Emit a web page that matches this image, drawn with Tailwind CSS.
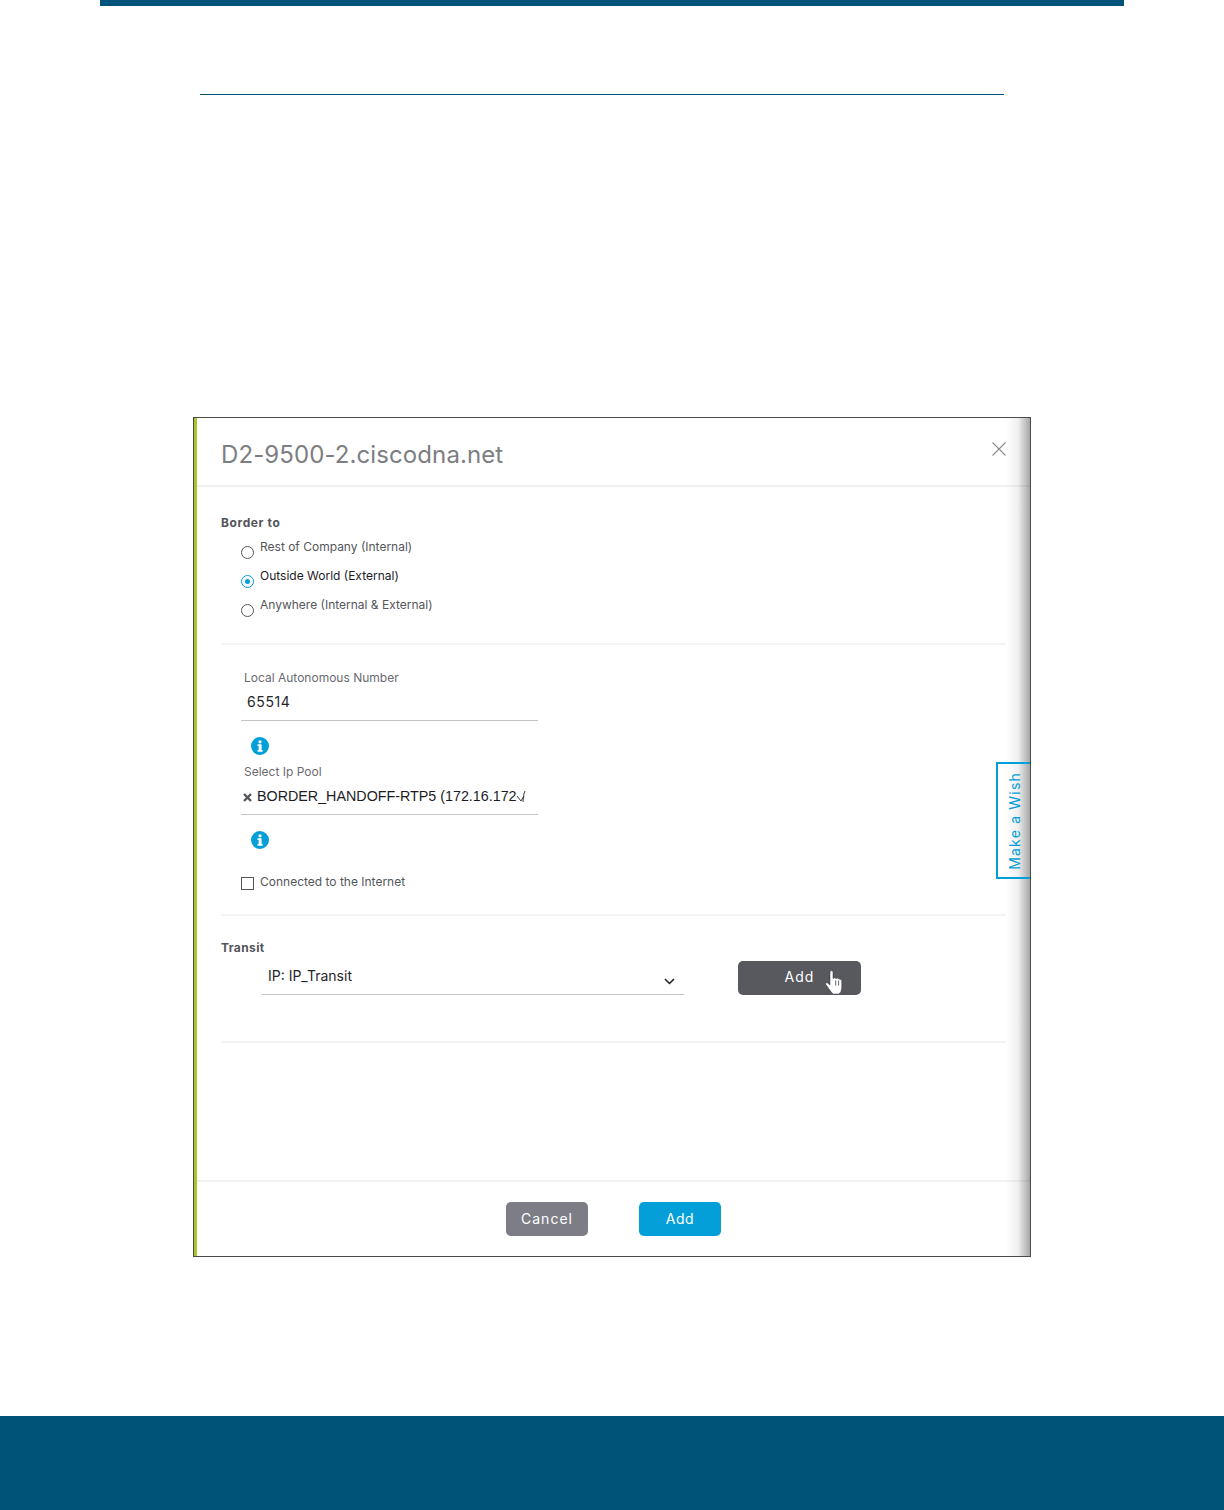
<!DOCTYPE html>
<html lang="en">
<head>
    <meta charset="UTF-8">
    <meta name="viewport" content="width=device-width, initial-scale=1.0">
    <script src="https://cdn.jsdelivr.net/npm/@tailwindcss/browser@4"></script>
    <title>D2-9500-2.ciscodna.net</title>
</head>
<body class="bg-white font-['Inter',sans-serif] overflow-hidden">
<div class="h-[1510px] flex flex-col">
    <div class="mx-[100px] h-[6px] shrink-0 bg-[#005378]"></div>
    <div class="ml-[200px] mr-[220px] mt-[88px] h-px shrink-0 bg-[#005378]"></div>

    <!-- screenshot of the dialog -->
    <main class="relative ml-[193px] mt-[322px] w-[838px] h-[840px] shrink-0 border border-[#4a4a4a] bg-white overflow-hidden">
        <div class="relative h-full flex flex-col border-l-[3px] border-l-[#a8c62c]">
            <header class="h-[69px] shrink-0 border-b-2 border-[#f1f1f1] pl-[24px] pt-[21px] flex justify-between">
                <h1 class="text-[24px] leading-[32px] tracking-[0.1px] text-[#7d7e82] font-normal">D2-9500-2.ciscodna.net</h1>
                <svg class="mr-[23px] mt-[2px] w-[16px] h-[16px]" viewBox="0 0 16 16" fill="none" stroke="#8b8c90" stroke-width="1.1"><path d="M1.5 1.5l13 13M14.5 1.5l-13 13"/></svg>
            </header>

            <section class="mx-[24px] h-[158px] shrink-0 border-b-2 border-[#f3f3f3] pt-[28px]">
                <h2 class="text-[12px] leading-[16px] font-bold tracking-[0.6px] text-[#53545a]">Border to</h2>
                <div class="mt-[8px] ml-[20px] flex flex-col gap-[9px] text-[12px] leading-[16px]">
                    <label class="flex text-[#55565b]"><span class="mt-[7px] w-[13px] h-[13px] rounded-full border border-[#55565b]"></span><span class="ml-[6px]">Rest of Company (Internal)</span></label>
                    <label class="flex text-[#1c1c1f]"><span class="mt-[7px] w-[13px] h-[13px] rounded-full border border-[#049fd9] flex items-center justify-center"><span class="w-[5px] h-[5px] rounded-full bg-[#049fd9]"></span></span><span class="ml-[6px]">Outside World (External)</span></label>
                    <label class="flex text-[#55565b]"><span class="mt-[7px] w-[13px] h-[13px] rounded-full border border-[#55565b]"></span><span class="ml-[6px]">Anywhere (Internal &amp; External)</span></label>
                </div>
            </section>

            <section class="mx-[24px] h-[271px] shrink-0 border-b-2 border-[#f3f3f3] pl-[20px] pt-[25px]">
                <div class="w-[297px]">
                    <div class="pl-[3px] text-[12px] leading-[16px] text-[#6a6b70]">Local Autonomous Number</div>
                    <div class="h-[35px] border-b border-[#c4c4c6] pl-[6px] pt-[6px] text-[14px] leading-[20px] tracking-[0.6px] text-[#26262a]">65514</div>
                    <svg class="ml-[10px] mt-[16px] w-[18px] h-[18px]" viewBox="0 0 18 18"><circle cx="9" cy="9" r="9" fill="#049fd9"/><rect x="7.6" y="7.4" width="3" height="7" fill="#fff"/><rect x="6.4" y="7.4" width="3" height="1.4" fill="#fff"/><rect x="6.4" y="13.2" width="5.4" height="1.4" fill="#fff"/><circle cx="9" cy="4.8" r="1.6" fill="#fff"/></svg>
                    <div class="mt-[9px] pl-[3px] text-[12px] leading-[16px] text-[#6a6b70]">Select Ip Pool</div>
                    <div class="relative h-[35px] border-b border-[#c4c4c6] pl-[2px] pt-[6px] text-[14.3px] leading-[20px] text-[#1c1c1f] flex items-start">
                        <svg class="mt-[7px] w-[9px] h-[9px]" viewBox="0 0 9 9" fill="none" stroke="#55565b" stroke-width="2.4"><path d="M1 1l7 7M8 1l-7 7"/></svg>
                        <span class="ml-[5px] font-['Liberation_Sans',sans-serif] whitespace-nowrap">BORDER_HANDOFF-RTP5 (172.16.172</span>
                        <svg class="absolute left-[275px] top-[10px] w-[12px] h-[14px]" viewBox="0 0 12 14" fill="none" stroke="#3a3a3e" stroke-width="1"><path d="M1 6l4 5 3-5M9 1C7.500 3 7.500 8 7 12"/></svg>
                    </div>
                    <svg class="ml-[10px] mt-[16px] w-[18px] h-[18px]" viewBox="0 0 18 18"><circle cx="9" cy="9" r="9" fill="#049fd9"/><rect x="7.6" y="7.4" width="3" height="7" fill="#fff"/><rect x="6.4" y="7.4" width="3" height="1.400" fill="#fff"/><rect x="6.4" y="13.2" width="5.4" height="1.4" fill="#fff"/><circle cx="9" cy="4.8" r="1.6" fill="#fff"/></svg>
                    <label class="mt-[25px] flex text-[12px] leading-[16px] text-[#55565b]"><span class="mt-[3px] w-[13px] h-[13px] border border-[#55565b]"></span><span class="ml-[6px]">Connected to the Internet</span></label>
                </div>
            </section>

            <section class="mx-[24px] h-[127px] shrink-0 border-b-2 border-[#f3f3f3] pt-[24px]">
                <h2 class="text-[12px] leading-[16px] font-bold tracking-[0.4px] text-[#53545a]">Transit</h2>
                <div class="flex items-start">
                    <div class="ml-[41px] w-[422px] h-[40px] mt-[-1px] border-b border-[#c4c4c6] pl-[6px] pt-[11px] pr-[9px] flex justify-between text-[14px] leading-[20px] text-[#26262a]">
                        <span>IP: IP_Transit</span>
                        <svg class="mt-[12px] w-[11px] h-[7px]" viewBox="0 0 11 7" fill="none" stroke="#1c1c1f" stroke-width="1.5"><path d="M1 1l4.500 4.500L10 1"/></svg>
                    </div>
                    <button class="relative ml-[54px] mt-[5px] w-[123px] h-[34px] pb-[3px] rounded-[5px] bg-[#58585f] text-white text-[14px] tracking-[1px]">Add
                        <svg class="absolute left-[87px] top-[9px] w-[18px] h-[24px]" viewBox="0 0 18 24"><path d="M5 2Q5 .5 6.500 .5T8 2V8.500Q9.500 7 11 8.500 12.500 7.500 14 9 15.500 8.500 16.800 10.500V18Q16.500 22 14 24H8Q6 22 4 19L.8 14.500Q0 12.500 2 12.500L5 15Z" fill="#fff" stroke="#2c2c30" stroke-width=".5"/><path d="M10.700 10.500v5M13.600 10.500v5" stroke="#55555c" stroke-width=".9" fill="none"/></svg>
                    </button>
                </div>
            </section>

            <div class="h-[139px] shrink-0 border-b-2 border-[#f1f1f1]"></div>

            <footer class="flex-1 flex items-start pt-[20px] pl-[309px] gap-[51px]">
                <button class="w-[82px] h-[34px] pb-[1px] rounded-[5px] bg-[#7d7e85] text-white text-[14px] tracking-[1px]">Cancel</button>
                <button class="w-[82px] h-[34px] pb-[1px] rounded-[5px] bg-[#049fd9] text-white text-[14px] tracking-[0.5px]">Add</button>
            </footer>
        </div>
        <!-- soft shadow down the right side, sits over the divider lines -->
        <div class="absolute right-0 top-0 bottom-0 w-[24px] bg-gradient-to-r from-transparent via-black/6 to-black/35 pointer-events-none"></div>
        <aside class="absolute right-0 top-[344px] w-[34px] h-[117px] border-2 border-r-0 border-[#049fd9] flex items-center justify-center">
            <span class="[writing-mode:vertical-rl] rotate-180 text-[14px] tracking-[1.2px] text-[#049fd9] whitespace-nowrap">Make a Wish</span>
        </aside>
    </main>

    <div class="mt-auto h-[94px] shrink-0 bg-[#005378]"></div>
</div>
</body>
</html>
